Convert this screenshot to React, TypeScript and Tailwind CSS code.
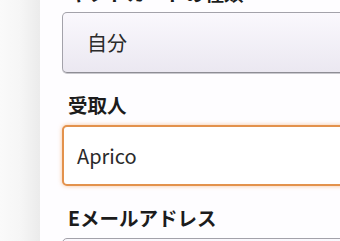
import React from "react";

const font = { fontFamily: '"Noto Sans CJK JP", "Noto Sans", sans-serif' };

export default function App() {
  return (
    <div className="w-[340px] h-[241px] overflow-hidden flex bg-[#f9f9f9]" style={font}>
      <div className="w-[40px] shrink-0 bg-gradient-to-r from-[#fafafa] via-[#f6f6f6] to-[#ebebeb]" />
      <div className="flex-1 bg-[#fefdff] pl-[22px] flex flex-col min-w-0">
        <div className="-mt-[19px] mb-[7px] pl-[6px] h-[24px] leading-[24px] text-[19.5px] font-bold text-[#1c1c1c] whitespace-nowrap">
          ギフトカードの種類
        </div>
        <div className="h-[61px] w-[320px] shrink-0 rounded-[5px] border border-[#a3a2aa] border-b-[#8e8d95] bg-gradient-to-b from-[#faf8fd] to-[#ebe8f1] shadow-[0_1px_0_#c9c8ce] flex items-center pl-[24px] text-[20px] text-[#2a2a2a]">
          自分
        </div>
        <div className="mt-[20px] mb-[8px] pl-[6px] h-[24px] leading-[24px] text-[19.5px] font-bold text-[#1c1c1c] whitespace-nowrap">
          受取人
        </div>
        <div className="h-[61px] w-[320px] shrink-0 rounded-[5px] border-2 border-[#e3924c] bg-white shadow-[0_0_4px_rgba(240,150,70,0.55)] flex items-center pl-[13px] text-[20px] text-[#2a2a2a]">
          Aprico
        </div>
        <div className="mt-[20px] mb-[8px] pl-[6px] h-[24px] leading-[24px] text-[19.5px] font-bold text-[#1c1c1c] whitespace-nowrap">
          Eメールアドレス
        </div>
        <div className="h-[61px] w-[320px] shrink-0 rounded-[5px] border border-[#a3a2aa] bg-gradient-to-b from-[#faf8fd] to-[#ebe8f1]" />
      </div>
    </div>
  );
}
